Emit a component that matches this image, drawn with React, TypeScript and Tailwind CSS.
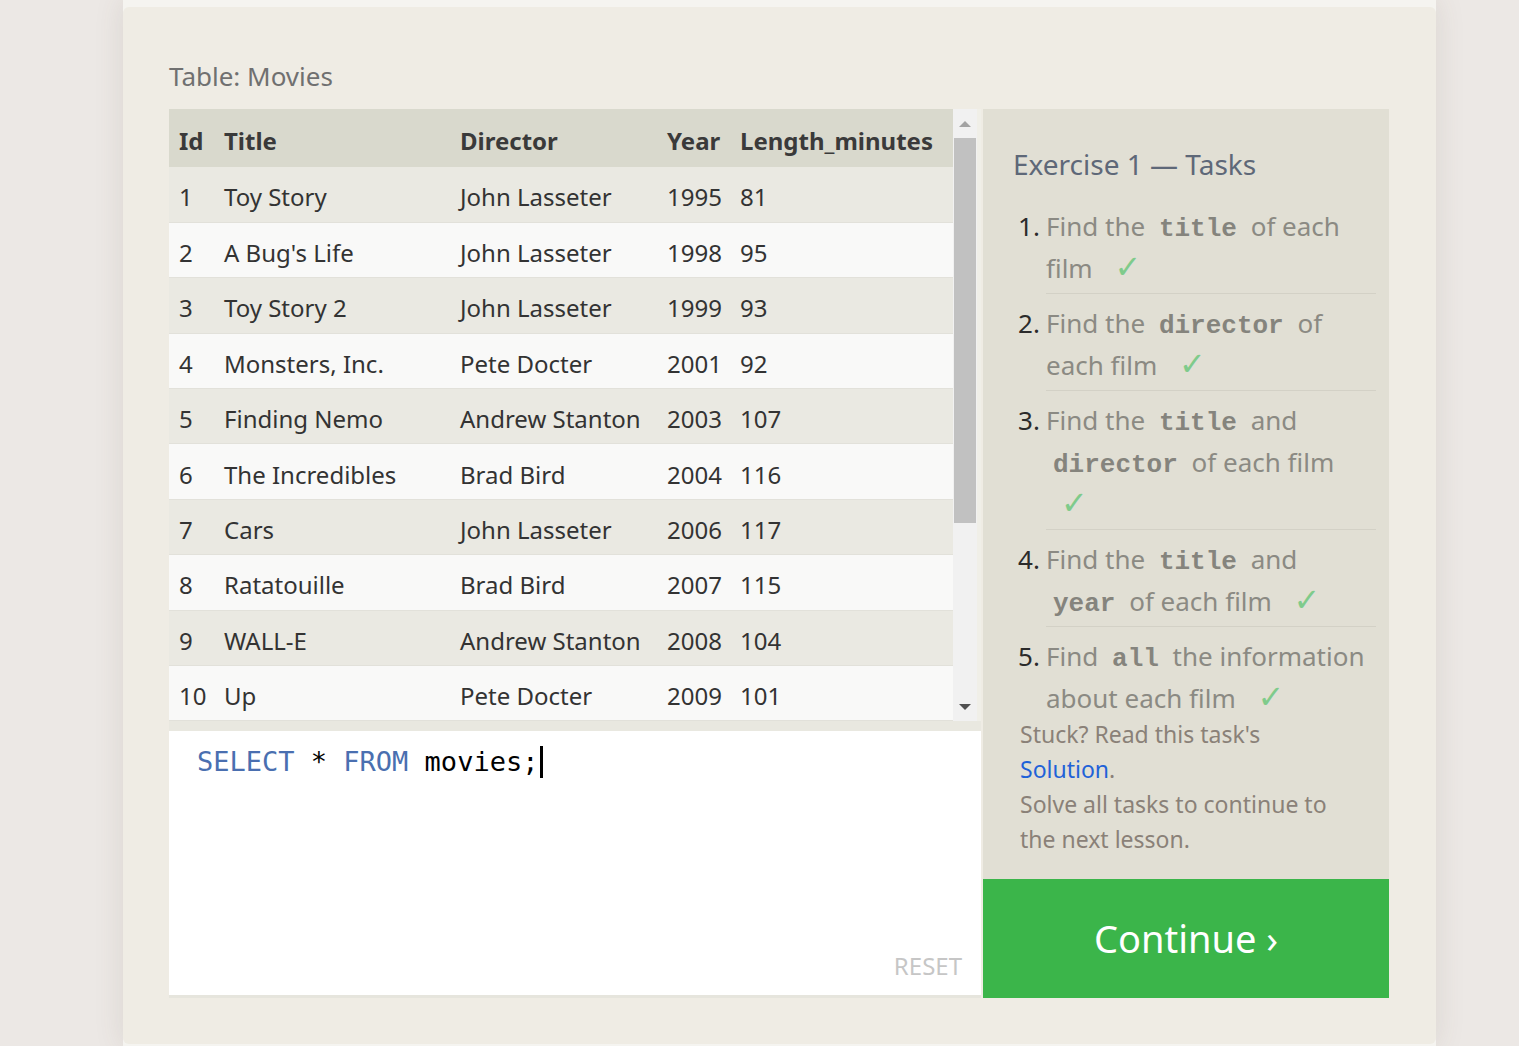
import React from 'react';

interface Movie {
  id: number;
  title: string;
  director: string;
  year: number;
  length: number;
}

const movies: Movie[] = [
  { id: 1, title: 'Toy Story', director: 'John Lasseter', year: 1995, length: 81 },
  { id: 2, title: "A Bug's Life", director: 'John Lasseter', year: 1998, length: 95 },
  { id: 3, title: 'Toy Story 2', director: 'John Lasseter', year: 1999, length: 93 },
  { id: 4, title: 'Monsters, Inc.', director: 'Pete Docter', year: 2001, length: 92 },
  { id: 5, title: 'Finding Nemo', director: 'Andrew Stanton', year: 2003, length: 107 },
  { id: 6, title: 'The Incredibles', director: 'Brad Bird', year: 2004, length: 116 },
  { id: 7, title: 'Cars', director: 'John Lasseter', year: 2006, length: 117 },
  { id: 8, title: 'Ratatouille', director: 'Brad Bird', year: 2007, length: 115 },
  { id: 9, title: 'WALL-E', director: 'Andrew Stanton', year: 2008, length: 104 },
  { id: 10, title: 'Up', director: 'Pete Docter', year: 2009, length: 101 },
];

const sans = 'font-["Noto_Sans","Open_Sans",sans-serif]';

function Code({ children }: { children: React.ReactNode }) {
  return (
    <code className='px-[7px] leading-none font-["Liberation_Mono","DejaVu_Sans_Mono",monospace] font-bold text-[#85847d]'>
      {children}
    </code>
  );
}

function Check() {
  return (
    <span className='ml-[15px] leading-none font-["DejaVu_Sans",sans-serif] text-[32px] text-[#7fcb8b]'>✓</span>
  );
}

function Task({ n, last, children }: { n: number; last?: boolean; children: React.ReactNode }) {
  return (
    <li className="flex mt-[8px] first:mt-0">
      <span className="w-[28px] shrink-0 text-[#2b2b2b]">{n}.</span>
      <div className={`w-[330px] pb-[4px] ${last ? '' : 'border-b border-[#d3d1c6]'}`}>{children}</div>
    </li>
  );
}

export default function App() {
  return (
    <div className={`h-screen overflow-hidden bg-[#ece8e5] ${sans}`}>
      <div className="ml-[123px] w-[1313px] h-full bg-[#f5f4f0] pt-[7px] shadow-[0_0_28px_rgba(90,70,60,0.12)]">
        <div className="h-[1037px] rounded-[6px] bg-[#efece4] px-[46px]">
          <h2 className="pt-[51px] text-[26px] leading-[36px] text-[#707070]">Table: Movies</h2>

          <div className="mt-[15px] flex gap-[2px]">
            {/* Left: table + editor */}
            <div className="w-[812px]">
              <div className="flex h-[612px]">
                <table className="w-[784px] table-fixed border-collapse text-[24px] text-[#333]">
                  <colgroup>
                    <col className="w-[45px]" />
                    <col className="w-[236px]" />
                    <col className="w-[207px]" />
                    <col className="w-[73px]" />
                    <col className="w-[223px]" />
                  </colgroup>
                  <thead>
                    <tr className="h-[58px] bg-[#d9d9cd] text-left font-bold text-[#3a3a3a]">
                      <th className="pl-[10px] pt-[5px] font-bold">Id</th>
                      <th className="pl-[10px] pt-[5px] font-bold">Title</th>
                      <th className="pl-[10px] pt-[5px] font-bold">Director</th>
                      <th className="pl-[10px] pt-[5px] font-bold">Year</th>
                      <th className="pl-[10px] pt-[5px] font-bold">Length_minutes</th>
                    </tr>
                  </thead>
                  <tbody>
                    {movies.map((m, i) => (
                      <tr
                        key={m.id}
                        className={`h-[55.4px] border-b border-[#e2e1da] ${i % 2 === 0 ? 'bg-[#eae9e2]' : 'bg-[#f9f9f8]'}`}
                      >
                        <td className="pl-[10px] pt-[6px]">{m.id}</td>
                        <td className="pl-[10px] pt-[6px]">{m.title}</td>
                        <td className="pl-[10px] pt-[6px]">{m.director}</td>
                        <td className="pl-[10px] pt-[6px]">{m.year}</td>
                        <td className="pl-[10px] pt-[6px]">{m.length}</td>
                      </tr>
                    ))}
                  </tbody>
                </table>
                {/* scrollbar */}
                <div className="flex w-[24px] flex-col bg-[#f1f1f1]">
                  <div className="flex h-[29px] items-center justify-center">
                    <div className="h-0 w-0 border-x-[6px] border-b-[6px] border-x-transparent border-b-[#a3a3a3]" />
                  </div>
                  <div className="mx-[1px] h-[385px] bg-[#c1c1c1]" />
                  <div className="flex-1" />
                  <div className="flex h-[29px] items-center justify-center">
                    <div className="h-0 w-0 border-x-[6px] border-t-[6px] border-x-transparent border-t-[#505050]" />
                  </div>
                </div>
                <div className="w-[4px] bg-[#f0efe8]" />
              </div>
              <div className="h-[10px] bg-[#e9e8e0]" />
              <div className="flex h-[267px] flex-col border-b-[3px] border-[#e6e5dd] bg-white pl-[28px] pr-[19px] pt-[11px]">
                <div className='flex items-center text-[27px] leading-[40px] font-["DejaVu_Sans_Mono","Liberation_Mono",monospace] text-black'>
                  <span className="text-[#4a6fb0]">SELECT</span>
                  <span className="whitespace-pre"> * </span>
                  <span className="text-[#4a6fb0]">FROM</span>
                  <span className="whitespace-pre"> movies;</span>
                  <span className="ml-[2px] h-[32px] w-[3px] bg-black" />
                </div>
                <div className="flex-1" />
                <div className="mb-[14px] self-end text-[24px] leading-[30px] text-[#c6c6c6]">RESET</div>
              </div>
            </div>

            {/* Right: tasks */}
            <div className="w-[406px]">
              <div className="h-[770px] bg-[#e1dfd4] pt-[35px]">
                <h3 className="pl-[30px] text-[28px] leading-[40px] text-[#5e6878]">Exercise 1 — Tasks</h3>
                <ol className="mt-[21px] pl-[35px] text-[26px] leading-[42px] text-[#8b8a83]">
                  <Task n={1}>
                    Find the <Code>title</Code> of each
                    <br />
                    film <Check />
                  </Task>
                  <Task n={2}>
                    Find the <Code>director</Code> of
                    <br />
                    each film <Check />
                  </Task>
                  <Task n={3}>
                    Find the <Code>title</Code> and
                    <br />
                    <Code>director</Code> of each film
                    <br />
                    <Check />
                  </Task>
                  <Task n={4}>
                    Find the <Code>title</Code> and
                    <br />
                    <Code>year</Code> of each film <Check />
                  </Task>
                  <Task n={5} last>
                    Find <Code>all</Code> the information
                    <br />
                    about each film <Check />
                  </Task>
                </ol>
                <div className="-mt-[6px] pl-[37px] text-[23px] leading-[35px] text-[#8a8178]">
                  <p>Stuck? Read this task's</p>
                  <p>
                    <span className="text-[#1f62d8]">Solution</span>.
                  </p>
                  <p>Solve all tasks to continue to</p>
                  <p>the next lesson.</p>
                </div>
              </div>
              <button className="flex h-[119px] w-full items-center justify-center bg-[#3bb54a] text-[38px] text-white">
                Continue ›
              </button>
            </div>
          </div>
        </div>
      </div>
    </div>
  );
}
